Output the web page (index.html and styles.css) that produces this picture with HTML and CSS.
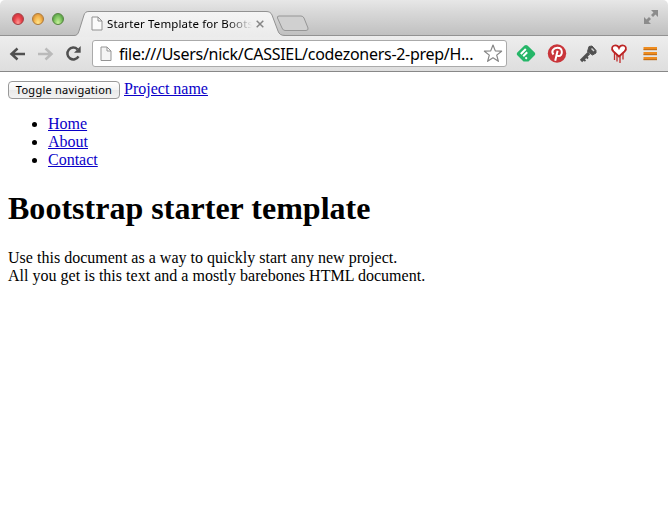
FILE: index.html
```html
<!DOCTYPE html>
<html lang="en">
<head>
<meta charset="utf-8">
<title>Starter Template for Bootstrap</title>
<link rel="stylesheet" href="styles.css">
</head>
<body>
<div class="browser">
  <div class="tabstrip">
    <div class="lights"><i class="light red"></i><i class="light amber"></i><i class="light green"></i></div>
    <div class="tab">
      <svg class="tab-shape" width="212" height="26" viewBox="0 0 212 26">
        <defs><linearGradient id="tabfill" x1="0" y1="0" x2="0" y2="1"><stop offset="0" stop-color="#f5f5f5"/><stop offset="1" stop-color="#ebebeb"/></linearGradient></defs>
        <path d="M0 26V24.500C3 24.500 4 23 5 20L10 4C11 1.500 12 .5 15 .5H192C195 .5 197 1.500 198 4L204 20C205 23 207 24.500 211 24.500V26Z" fill="url(#tabfill)"/>
        <path d="M0 24.500C3 24.500 4 23 5 20L10 4C11 1.500 12 .5 15 .5H192C195 .5 197 1.500 198 4L204 20C205 23 207 24.500 211 24.500" fill="none" stroke="#929292"/>
      </svg>
      <svg class="page-icon" width="12" height="15" viewBox="0 0 12 15"><path d="M1 1H7L11 5V14H1ZM7 1V5H11" fill="#fafafa" stroke="#919191"/></svg>
      <span class="tab-title">Starter Template for Bootst</span>
      <svg class="close" width="8" height="8" viewBox="0 0 8 8"><path d="M.7.7L7.300 7.300M7.300.7L.7 7.300" stroke="#858585" stroke-width="1.500"/></svg>
    </div>
    <svg class="new-tab" width="33" height="17" viewBox="0 0 33 17"><path d="M3 1H25Q27 1 28 3L32 13Q32.500 15.500 30 15.500H9Q7 15.500 6 13L1.500 3Q1 1 3 1Z" fill="#d0d0d0" stroke="#969696"/></svg>
    <svg class="expand" width="16" height="16" viewBox="0 0 16 16"><path d="M8 1H15V8L12.500 5.500L10 8L8 6L10.500 3.500ZM1 8L3.500 10.500L6 8L8 10L5.500 12.500L8 15H1Z" fill="#8c8c8c"/></svg>
  </div>
  <div class="toolbar">
    <svg class="back" width="17" height="16" viewBox="0 0 17 16"><path d="M16 8H3M8.500 2.500L2.500 8L8.500 13.500" fill="none" stroke="#505050" stroke-width="2.500"/></svg>
    <svg class="forward" width="17" height="16" viewBox="0 0 17 16"><path d="M1 8H14M8.500 2.500L14.500 8L8.500 13.500" fill="none" stroke="#bababa" stroke-width="2.500"/></svg>
    <svg class="reload" width="17" height="17" viewBox="0 0 17 17"><path d="M13.500 11.300A5.900 5.900 0 1 1 12.500 4.300" fill="none" stroke="#505050" stroke-width="2.500"/><path d="M15.700 1V7.700H9Z" fill="#505050"/></svg>
    <div class="address">
      <svg width="12" height="16" viewBox="0 0 12 16"><path d="M1 1H7L11 5V14.500H1ZM7 1V5H11" fill="#f4f4f4" stroke="#959595"/></svg>
      <span class="url">file:///Users/nick/CASSIEL/codezoners-2-prep/H...</span>
      <svg class="star" width="20" height="19" viewBox="0 0 20 19"><path d="M10 1L12.300 6.900L18.600 7.200L13.700 11.100L15.400 17.300L10 13.800L4.600 17.300L6.300 11.100L1.400 7.200L7.700 6.900Z" fill="#fff" stroke="#858585" stroke-width="1.200" stroke-linejoin="round"/></svg>
    </div>
    <div class="extensions">
      <svg width="20" height="20" viewBox="0 0 20 20"><path d="M8.500 1.600Q10 .2 11.500 1.600L18.700 8.500Q20 10 18.700 11.300L12.500 17.500H7.500L1.300 11.300Q0 10 1.300 8.500Z" fill="#25b668"/><path d="M4.800 10L9.800 5M7.200 12.300L11.200 8.300M9.500 14.700L10.800 13.400" stroke="#fff" stroke-width="2" fill="none"/></svg>
      <svg width="20" height="20" viewBox="0 0 20 20"><circle cx="10" cy="9.500" r="9.200" fill="#c9353a"/><path d="M6.500 10.500C3.800 7.500 6.300 3.800 10.300 3.800C16.500 3.800 15.800 12.100 11.600 12.100C10.300 12.100 9.400 11.400 9.300 10.700M10.600 6.700L8.200 16.800" fill="none" stroke="#fff" stroke-width="2"/></svg>
      <svg width="20" height="20" viewBox="0 0 20 20"><path d="M11 9L3 17" stroke="#505050" stroke-width="3.200"/><path d="M5 15L7.500 17M7.500 12L10 14.500" stroke="#505050" stroke-width="1.800"/><path d="M11 2.500L14 2L18 6.500V9L14.500 11L9.500 7.500Z" fill="#505050" stroke="#505050" stroke-linejoin="round"/><path d="M13.500 4.500L16 7" stroke="#d5d5d5" stroke-width="1.400"/></svg>
      <svg width="20" height="20" viewBox="0 0 20 20"><path d="M5.500 9V16M8 11V17.500M11 12V19M14 9V15.500" stroke="#c12c2c" stroke-width="1.300"/><path d="M10 12.500L4.500 7.500C1.500 4.500 3.500 1.300 6.300 1.300Q9 1.300 10 3.800Q11 1.300 13.700 1.300C16.500 1.300 18.500 4.500 15.500 7.500Z" fill="#fff" stroke="#bd2424" stroke-width="1.800"/></svg>
      <svg width="20" height="20" viewBox="0 0 20 20"><path d="M3.500 4.500H17M3.500 9.500H17M3.500 14.500H17" stroke="#ef8c1e" stroke-width="3"/><path d="M3.500 5.700H17M3.500 10.700H17M3.500 15.700H17" stroke="#b9691b"/></svg>
    </div>
  </div>
</div>
<main class="page">
  <div class="navbar"><button class="toggle" type="button">Toggle navigation</button> <a href="#">Project name</a></div>
  <ul class="nav">
    <li><a href="#">Home</a></li>
    <li><a href="#">About</a></li>
    <li><a href="#">Contact</a></li>
  </ul>
  <h1>Bootstrap starter template</h1>
  <p>Use this document as a way to quickly start any new project.<br>All you get is this text and a mostly barebones HTML document.</p>
</main>
</body>
</html>
```
FILE: styles.css
```css
* { box-sizing: border-box; }
html, body { margin: 0; height: 100%; overflow: hidden; background: #fff; }
body { font: 16px/18px "Liberation Serif", serif; color: #000; }
svg { display: block; flex: none; }
.browser { height: 72px; border-bottom: 1px solid #888; border-radius: 5px 5px 0 0; overflow: hidden; }
.tabstrip { display: flex; height: 36px; background: linear-gradient(#e7e7e7, #dadada 30%, #bfbfbf); box-shadow: inset 0 -1px #929292; }
.lights { display: flex; gap: 8px; width: 74px; padding: 13px 0 0 12px; }
.light { width: 12px; height: 12px; border-radius: 50%; border: 1px solid; }
.red { background: radial-gradient(ellipse at 50% 90%, #ff9c96, #e9444b 50%, #cf3640 75%, #f5bcbc); border-color: #a63e43; }
.amber { background: radial-gradient(ellipse at 50% 90%, #ffe68c, #f4b64f 50%, #dc9438 75%, #fae0b5); border-color: #ad7938; }
.green { background: radial-gradient(ellipse at 50% 90%, #c9f29c, #82c663 50%, #5ba44a 75%, #d0edc1); border-color: #55843f; }
.tab { position: relative; display: flex; width: 202px; height: 25px; margin-top: 11px; padding-left: 17px; }
.tab-shape { position: absolute; left: 0; top: 0; }
.page-icon { position: relative; margin-top: 5px; }
.tab-title { position: relative; width: 149px; margin: 4px 0 0 4px; white-space: nowrap; font: 11.5px/18px "Noto Sans", sans-serif; letter-spacing: 0.13px; -webkit-mask-image: linear-gradient(90deg, #000 120px, transparent 145px); mask-image: linear-gradient(90deg, #000 120px, transparent 145px); }
.close { position: relative; }
.tab .close { margin: 9px 0 0 0; }
.new-tab { margin-top: 15px; position: relative; }
.expand { margin: 9px 9px 0 auto; }
.toolbar { display: flex; align-items: center; height: 35px; padding: 0 8px 0 9px; background: linear-gradient(#ededed, #dedede); }
.forward { margin-left: 11px; }
.reload { margin-left: 11px; }
.address { display: flex; align-items: center; width: 415px; height: 27px; margin-left: 10px; padding: 0 3px 0 7px; background: #fff; border: 1px solid #aaa; border-radius: 3px; }
.url { width: 362px; margin-left: 7px; white-space: nowrap; font: 16px/24px "Noto Sans", sans-serif; letter-spacing: -0.28px; }
.star { margin-left: auto; }
.extensions { display: flex; gap: 11px; margin-left: 9px; }
.page { padding: 8px 8px 0; }
.navbar { display: flex; gap: 4px; height: 19px; }
.toggle { width: 112px; height: 18px; margin-top: 1px; padding: 0; border: 1px solid #999; border-radius: 4px; background: linear-gradient(#fff, #f3f3f3 50%, #e9e9e9 51%, #f2f2f2); color: #000; font: 11px/14px "Noto Sans", sans-serif; letter-spacing: 0.25px; white-space: nowrap; }
a { color: #0a00c8; text-decoration: underline; }
.nav { margin: 16px 0 0; padding-left: 40px; }
h1 { margin: 21px 0 0; font-size: 32px; line-height: 37px; letter-spacing: 0.02px; }
p { margin: 22px 0 0; letter-spacing: 0.015px; }
```
